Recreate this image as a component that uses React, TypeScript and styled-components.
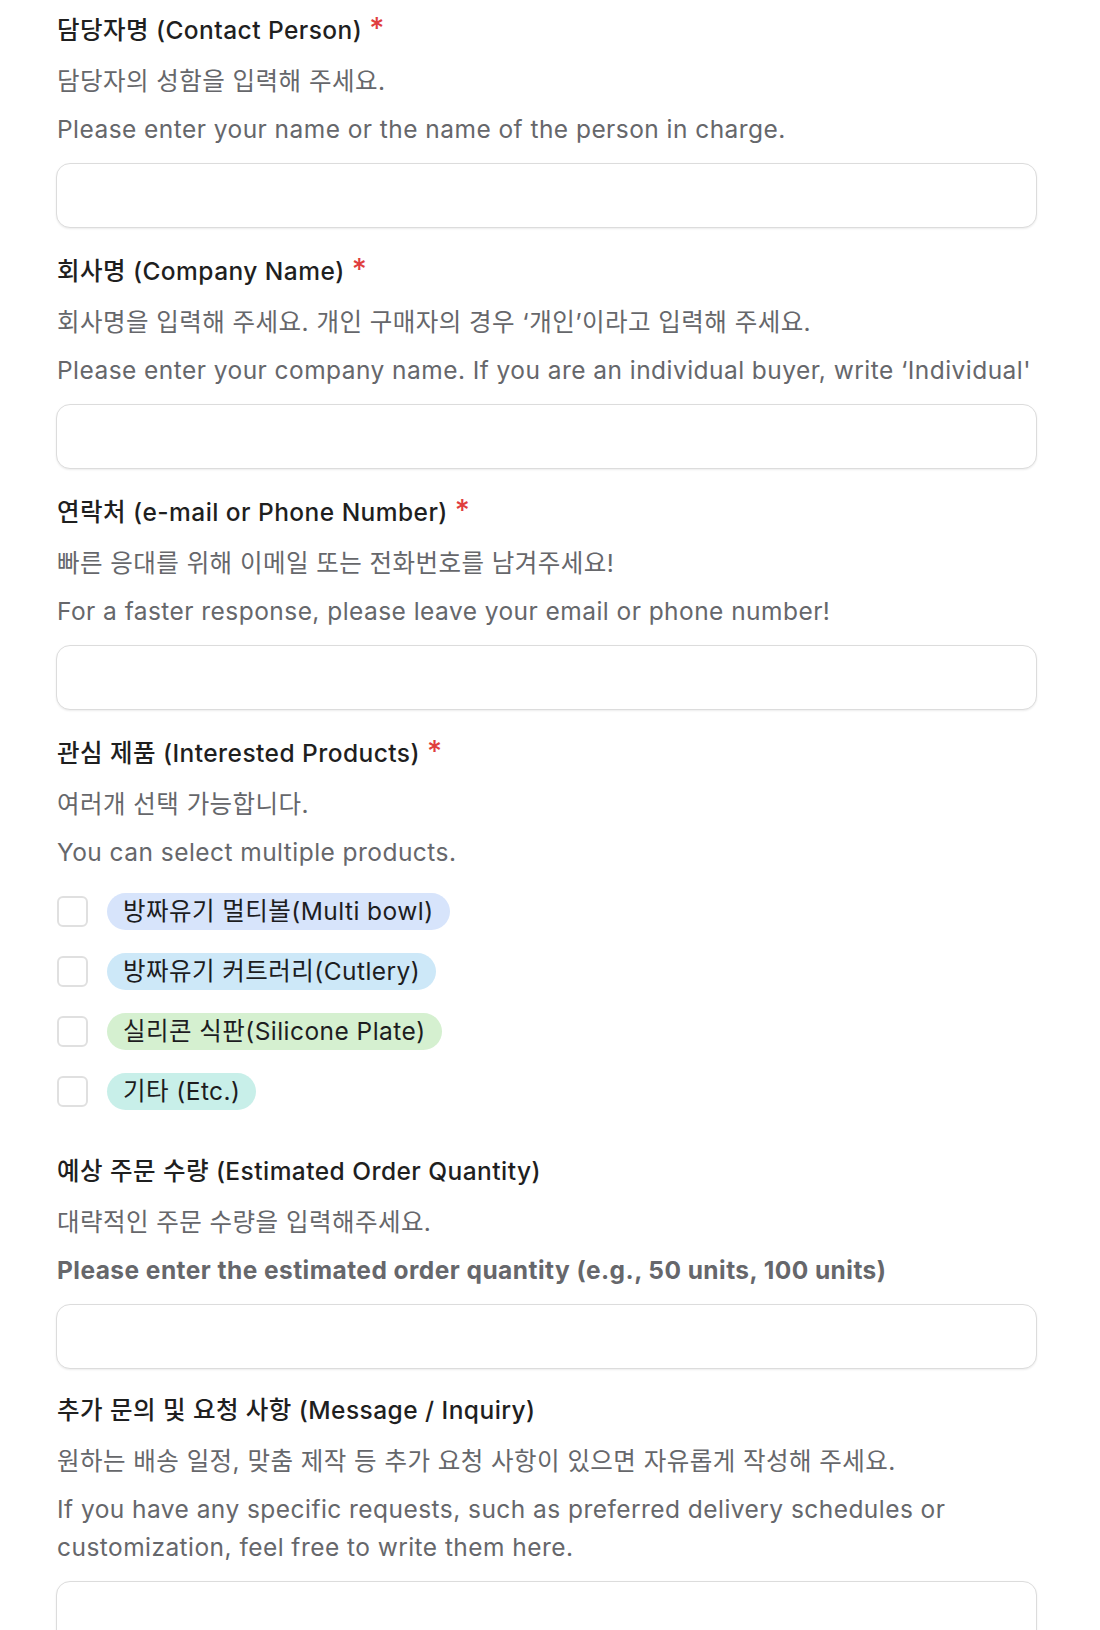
import React from "react";
import styled, { createGlobalStyle } from "styled-components";

const GlobalStyle = createGlobalStyle`
  html, body {
    margin: 0;
    padding: 0;
    background: #ffffff;
  }
  body {
    font-family: "Inter", "Noto Sans CJK KR", "Noto Sans", sans-serif;
    -webkit-font-smoothing: antialiased;
  }
  * { box-sizing: border-box; }
`;

const Form = styled.form`
  display: flex;
  flex-direction: column;
  gap: 23px;
  padding: 10px 63px 40px 56px;
  width: 1100px;
`;

const Field = styled.div<{ $extraBottom?: number }>`
  display: flex;
  flex-direction: column;
  padding-bottom: ${(p) => p.$extraBottom ?? 0}px;
`;

const Label = styled.label`
  font-size: 24.5px;
  line-height: 36px;
  font-weight: 500;
  letter-spacing: 0.45px;
  color: #1f1f1f;
  padding-left: 1px;
`;

const Required = styled.span`
  color: #e03e3e;
  margin-left: 7px;
  font-size: 29px;
  vertical-align: 1px;
  font-weight: 500;
`;

const Desc = styled.p<{ $bold?: boolean }>`
  margin: 14px 0 0 0;
  font-size: 24.5px;
  line-height: 38px;
  letter-spacing: 0.45px;
  font-weight: ${(p) => (p.$bold ? 700 : 400)};
  color: #66676b;
  padding-left: 1px;
  & + & { margin-top: 10px; }
`;

const EnDesc = styled(Desc)`
  max-width: 900px;
`;

const TextInput = styled.input`
  margin-top: 15px;
  width: 100%;
  height: 65px;
  border: 1px solid #dcdcdc;
  border-radius: 14px;
  box-shadow: 0 1px 2px rgba(15, 15, 15, 0.08);
  background: #ffffff;
  font: inherit;
  font-size: 24px;
  padding: 0 18px;
  outline: none;
`;

const TextArea = styled.textarea`
  margin-top: 15px;
  width: 100%;
  height: 140px;
  border: 1px solid #dcdcdc;
  border-radius: 14px;
  box-shadow: 0 1px 2px rgba(15, 15, 15, 0.08);
  background: #ffffff;
  font: inherit;
  font-size: 24px;
  padding: 16px 18px;
  resize: none;
  outline: none;
`;

const Options = styled.div`
  display: flex;
  flex-direction: column;
  gap: 23px;
  margin-top: 22px;
`;

const OptionRow = styled.label`
  display: flex;
  align-items: center;
  gap: 19px;
  cursor: pointer;
`;

const Box = styled.input`
  appearance: none;
  -webkit-appearance: none;
  margin: 0 0 0 1px;
  width: 31px;
  height: 31px;
  border: 2.5px solid #e0e0e0;
  border-radius: 6px;
  background: #ffffff;
  flex: 0 0 auto;
`;

const Pill = styled.span<{ $bg: string }>`
  display: inline-flex;
  align-items: center;
  height: 37px;
  padding: 0 16px;
  border-radius: 19px;
  background: ${(p) => p.$bg};
  color: #1d1d1f;
  font-size: 24.5px;
  letter-spacing: 0.45px;
  line-height: 37px;
  white-space: nowrap;
`;

type Section = {
  label: string;
  required?: boolean;
  ko: string;
  en: string;
  enBold?: boolean;
  kind: "input" | "textarea" | "checks";
};

const sections: Section[] = [
  {
    label: "담당자명 (Contact Person)",
    required: true,
    ko: "담당자의 성함을 입력해 주세요.",
    en: "Please enter your name or the name of the person in charge.",
    kind: "input",
  },
  {
    label: "회사명 (Company Name)",
    required: true,
    ko: "회사명을 입력해 주세요. 개인 구매자의 경우 ‘개인’이라고 입력해 주세요.",
    en: "Please enter your company name. If you are an individual buyer, write ‘Individual'",
    kind: "input",
  },
  {
    label: "연락처 (e-mail or Phone Number)",
    required: true,
    ko: "빠른 응대를 위해 이메일 또는 전화번호를 남겨주세요!",
    en: "For a faster response, please leave your email or phone number!",
    kind: "input",
  },
  {
    label: "관심 제품 (Interested Products)",
    required: true,
    ko: "여러개 선택 가능합니다.",
    en: "You can select multiple products.",
    kind: "checks",
  },
  {
    label: "예상 주문 수량 (Estimated Order Quantity)",
    ko: "대략적인 주문 수량을 입력해주세요.",
    en: "Please enter the estimated order quantity (e.g., 50 units, 100 units)",
    enBold: true,
    kind: "input",
  },
  {
    label: "추가 문의 및 요청 사항 (Message / Inquiry)",
    ko: "원하는 배송 일정, 맞춤 제작 등 추가 요청 사항이 있으면 자유롭게 작성해 주세요.",
    en: "If you have any specific requests, such as preferred delivery schedules or customization, feel free to write them here.",
    kind: "textarea",
  },
];

const products = [
  { name: "방짜유기 멀티볼(Multi bowl)", bg: "#d7e4fb" },
  { name: "방짜유기 커트러리(Cutlery)", bg: "#cde8f8" },
  { name: "실리콘 식판(Silicone Plate)", bg: "#d5f0d0" },
  { name: "기타 (Etc.)", bg: "#c8efe9" },
];

export default function App() {
  return (
    <>
      <GlobalStyle />
      <Form onSubmit={(e) => e.preventDefault()}>
        {sections.map((s, i) => (
          <Field key={i} $extraBottom={s.kind === "checks" ? 20 : 0}>
            <Label>
              {s.label}
              {s.required && <Required>*</Required>}
            </Label>
            <Desc>{s.ko}</Desc>
            {s.kind === "textarea" ? (
              <EnDesc>{s.en}</EnDesc>
            ) : (
              <Desc $bold={s.enBold}>{s.en}</Desc>
            )}
            {s.kind === "input" && <TextInput type="text" />}
            {s.kind === "textarea" && <TextArea />}
            {s.kind === "checks" && (
              <Options>
                {products.map((p) => (
                  <OptionRow key={p.name}>
                    <Box type="checkbox" />
                    <Pill $bg={p.bg}>{p.name}</Pill>
                  </OptionRow>
                ))}
              </Options>
            )}
          </Field>
        ))}
      </Form>
    </>
  );
}
